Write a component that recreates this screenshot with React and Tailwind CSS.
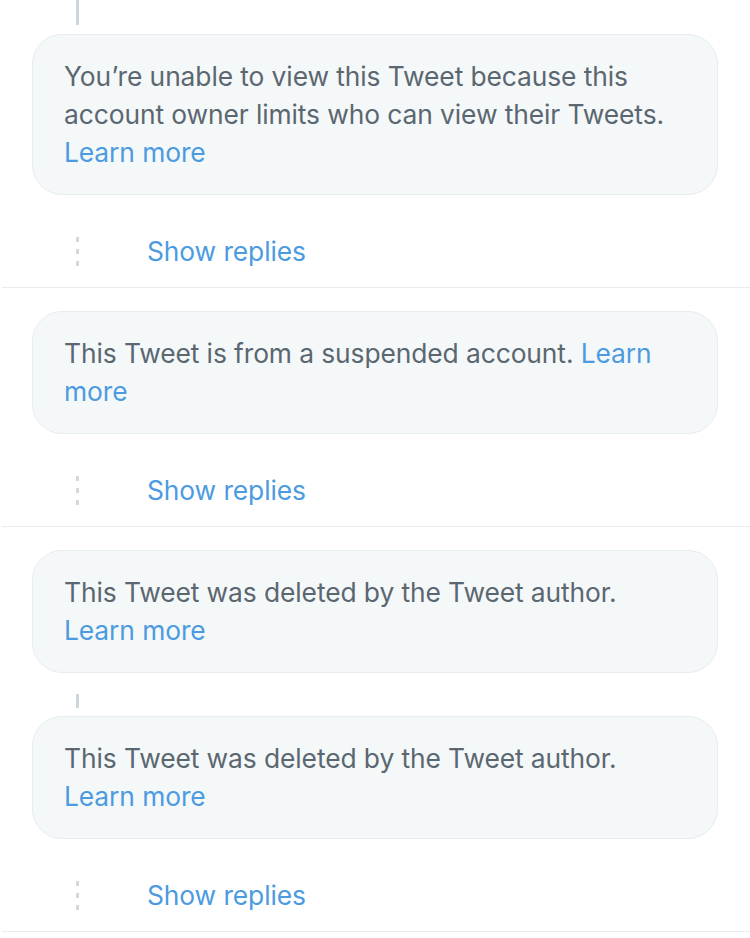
import React from "react";

const Link = () => <span className="text-[#4c9be0]">Learn more</span>;

function Notice({ children }) {
    return (
        <div className="mx-[32px] rounded-[30px] border border-[#e6ecf0] bg-[#f5f8f9] pl-[31px] pr-[32px] pt-[22px] pb-[23px] text-[26.4px] leading-[38px] text-[#5b6770]">
            {children}
        </div>
    );
}

function ShowReplies() {
    return (
        <div className="border-b border-[#e6ecf0] ml-[2px]">
            <div className="flex items-center h-[92px] pt-[21px] pb-[-1px]">
                <div className="w-[145px] flex flex-col items-center pl-[5px] gap-[7px] shrink-0">
                    <span className="block w-[3px] h-[5px] bg-[#d3d8dc]" />
                    <span className="block w-[3px] h-[5px] bg-[#d3d8dc]" />
                    <span className="block w-[3px] h-[5px] bg-[#d3d8dc]" />
                </div>
                <span className="text-[26.4px] text-[#4c9be0]">Show replies</span>
            </div>
        </div>
    );
}

export default function App() {
    return (
        <div className="w-[750px] min-h-[938px] bg-white font-['Inter',sans-serif] tracking-[-0.1px]">
            <div className="ml-[76px] w-[3px] h-[25px] bg-[#ccd6dd]" />
            <div className="pt-[9px]">
                <Notice>
                    You’re unable to view this Tweet because this account owner limits who can view their Tweets.{" "}
                    <Link />
                </Notice>
            </div>
            <ShowReplies />
            <div className="pt-[23px]">
                <Notice>
                    This Tweet is from a suspended account. <Link />
                </Notice>
            </div>
            <ShowReplies />
            <div className="pt-[23px]">
                <Notice>
                    This Tweet was deleted by the Tweet author. <Link />
                </Notice>
                <div className="ml-[76px] w-[3px] h-[14px] bg-[#ccd6dd] mt-[21px] mb-[8px]" />
                <Notice>
                    This Tweet was deleted by the Tweet author. <Link />
                </Notice>
            </div>
            <ShowReplies />
        </div>
    );
}
